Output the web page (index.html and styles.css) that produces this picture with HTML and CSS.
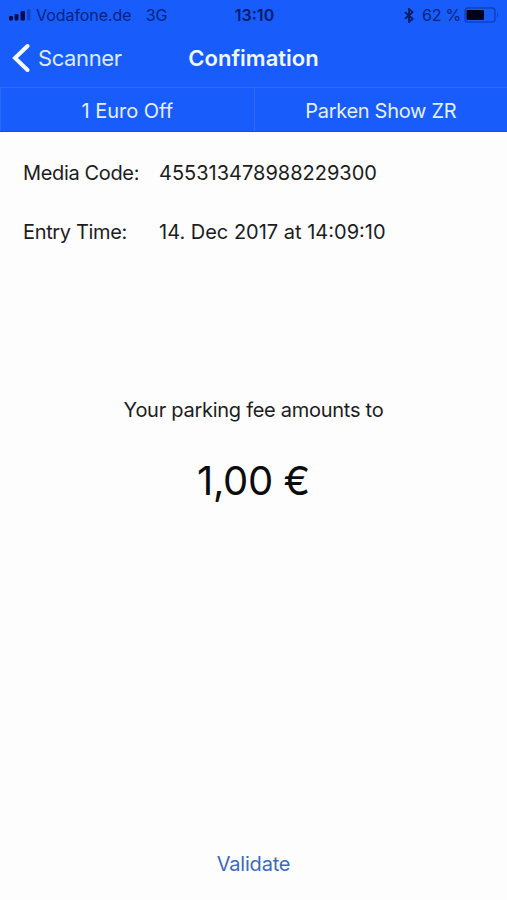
FILE: index.html
```html
<!DOCTYPE html>
<html lang="en">
<head>
  <meta charset="UTF-8" />
  <meta name="viewport" content="width=device-width, initial-scale=1.0"/>
  <title>Confimation</title>
  <link rel="stylesheet" href="styles.css">
</head>
<body>
  <header class="header">
    <!-- Status bar -->
    <div class="status-bar">
      <div class="status-left">
        <svg class="signal" width="22" height="12" viewBox="0 0 22 12">
          <rect x="0" y="7" width="4" height="4.5" rx="1"/>
          <rect x="5.5" y="5" width="4" height="6.5" rx="1"/>
          <rect x="11.5" y="2" width="4.5" height="9.5" rx="1"/>
          <rect class="weak" x="18" y="0" width="3.5" height="11.5" rx="1"/>
        </svg>
        <span class="carrier">Vodafone.de</span>
        <span class="network">3G</span>
      </div>
      <span class="clock">13:10</span>
      <div class="status-right">
        <svg class="bluetooth" width="10" height="15" viewBox="0 0 10 15">
          <path d="M1 4.2L8.6 10.8L5 14V1L8.6 4.2L1 10.8"/>
        </svg>
        <span class="percent">62 %</span>
        <svg class="battery" width="36" height="16" viewBox="0 0 36 16">
          <rect class="battery-case" x="1" y="1" width="30" height="14" rx="3"/>
          <rect class="battery-level" x="2.5" y="3" width="17.5" height="10" rx="1"/>
          <path class="battery-tip" d="M33 5.5Q35.5 8 33 10.5Z"/>
        </svg>
      </div>
    </div>

    <!-- Navigation -->
    <nav class="nav-bar">
      <a href="#" class="back">
        <svg width="18" height="30" viewBox="0 0 18 30">
          <path d="M15.5 3L3 15L15.5 27"/>
        </svg>
        <span class="back-label">Scanner</span>
      </a>
      <h1 class="title">Confimation</h1>
    </nav>

    <div class="tabs">
      <div class="tab"><span class="tab-discount">1 Euro Off</span></div>
      <div class="tab"><span class="tab-place">Parken Show ZR</span></div>
    </div>
  </header>

  <main class="content">
    <dl class="details">
      <dt class="code-label">Media Code:</dt>
      <dd class="code-value">455313478988229300</dd>
      <dt class="time-label">Entry Time:</dt>
      <dd class="time-value">14. Dec 2017 at 14:09:10</dd>
    </dl>
    <div class="fee">
      <p class="fee-text">Your parking fee amounts to</p>
      <p class="fee-amount">1,00 €</p>
    </div>
    <button type="button" class="validate">Validate</button>
  </main>
</body>
</html>
```
FILE: styles.css
```css
* { margin: 0; padding: 0; box-sizing: border-box; }
body {
  font-family: Inter, "Liberation Sans", sans-serif;
  font-size: 20px;
  color: #1c1c1e;
  background-color: #fdfdfd;
  height: 100vh;
  display: flex;
  flex-direction: column;
  overflow: hidden;
  white-space: nowrap;
}
.header {
  height: 132px;
  background-color: #185dfc;
  color: #e4efff;
}
/* Status bar */
.status-bar {
  height: 30px;
  padding: 0 7px 0 9px;
  display: grid;
  grid-template-columns: 1fr auto 1fr;
  align-items: center;
  font-size: 16px;
  color: #06237c;
}
.status-left,
.status-right {
  display: flex;
  align-items: center;
}
.status-right {
  justify-content: flex-end;
}
.signal {
  fill: #020d4e;
  margin-right: 5px;
}
.signal .weak {
  fill: #1244cb;
}
.carrier {
  letter-spacing: -0.05px;
}
.network {
  margin-left: 14px;
}
.clock {
  font-weight: 600;
  color: #041b69;
}
.bluetooth {
  fill: none;
  stroke: #041b69;
  stroke-width: 1.8;
  margin-right: 8px;
}
.percent {
  letter-spacing: -0.2px;
}
.battery {
  margin-left: 3px;
}
.battery-case {
  fill: none;
  stroke: #0e41be;
  stroke-width: 1.5;
}
.battery-level {
  fill: #000318;
}
.battery-tip {
  fill: #0e41be;
}
/* Navigation */
.nav-bar {
  height: 57px;
  padding: 0 12px 1px;
  display: grid;
  grid-template-columns: 1fr auto 1fr;
  align-items: center;
}
.back {
  display: flex;
  align-items: center;
  gap: 8px;
  color: #dceaff;
  text-decoration: none;
  font-size: 22px;
  letter-spacing: -0.4px;
}
.back svg {
  fill: none;
  stroke: #f4faff;
  stroke-width: 4;
  stroke-linecap: round;
}
.title {
  font-size: 22px;
  font-weight: 600;
  color: #f0f8ff;
}
.tabs {
  height: 45px;
  display: grid;
  grid-template-columns: 1fr 1fr;
  border-top: 1px solid #2d6afa;
  border-bottom: 1px solid #174ed6;
}
.tab {
  display: flex;
  align-items: center;
  justify-content: center;
  padding-top: 2px;
  border-left: 1px solid #2d6afa;
}
.tab-place {
  letter-spacing: -0.3px;
}
/* Ticket details */
.content {
  flex: 1;
  display: flex;
  flex-direction: column;
  align-items: center;
}
.details {
  align-self: stretch;
  padding: 29px 23px 0;
  display: grid;
  grid-template-columns: 136px 1fr;
  row-gap: 35px;
  line-height: 24px;
}
.code-label,
.time-label {
  letter-spacing: -0.35px;
}
.fee {
  margin-top: 154px;
  text-align: center;
}
.fee-text {
  line-height: 24px;
  letter-spacing: -0.27px;
}
.fee-amount {
  margin-top: 34px;
  font-size: 40px;
  line-height: 50px;
  letter-spacing: -0.4px;
  color: #0c0c0c;
}
.validate {
  margin-top: auto;
  margin-bottom: 24px;
  border: none;
  background: none;
  font: inherit;
  line-height: 24px;
  letter-spacing: -0.2px;
  color: #3e68c4;
  cursor: pointer;
}
```
